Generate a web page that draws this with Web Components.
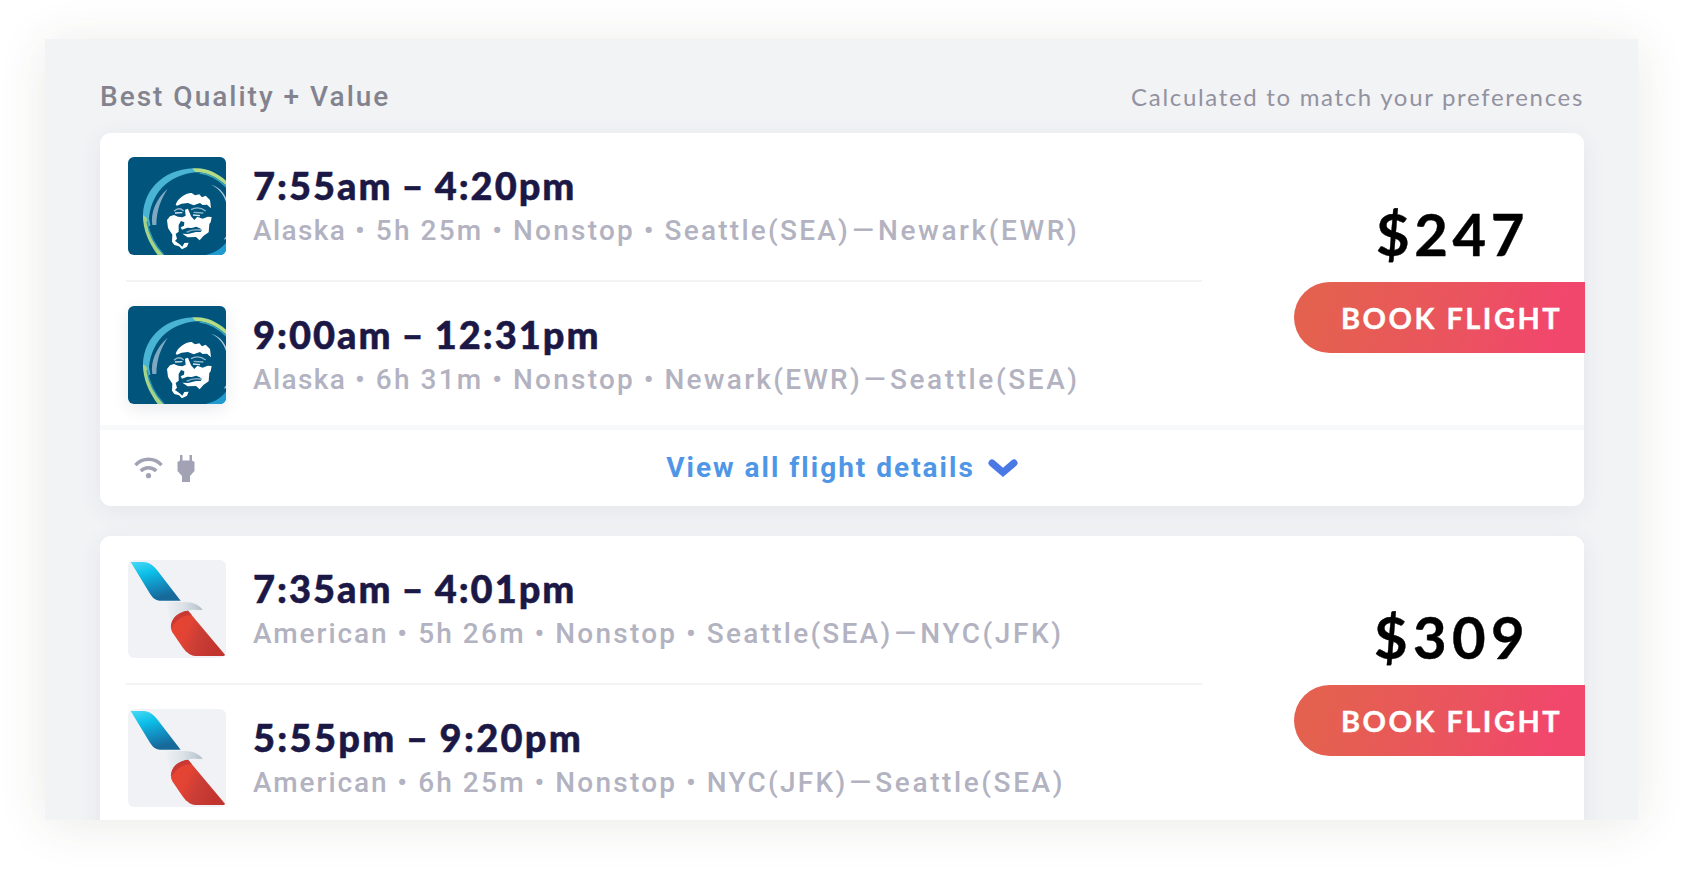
<!DOCTYPE html>
<html lang="en">
<head>
<meta charset="utf-8">
<title>Flight results</title>
<style>
html,body{margin:0;height:100%;background:#fff;overflow:hidden}
body{font-family:Lato,"Liberation Sans",sans-serif}
flight-leg[airline="american"]{--carrier-spacing:1.95px}
</style>
</head>
<body>
<flight-results heading="Best Quality + Value" note="Calculated to match your preferences">
  <flight-card price="$247" amenities>
    <flight-leg airline="alaska" carrier="Alaska" time="7:55am – 4:20pm" from="Seattle(SEA)" to="Newark(EWR)">5h 25m • Nonstop</flight-leg>
    <flight-leg airline="alaska" carrier="Alaska" raised time="9:00am – 12:31pm" from="Newark(EWR)" to="Seattle(SEA)">6h 31m • Nonstop</flight-leg>
  </flight-card>
  <flight-card price="$309" style="--price-spacing:5.4px;--price-inset:80px">
    <flight-leg airline="american" carrier="American" time="7:35am – 4:01pm" from="Seattle(SEA)" to="NYC(JFK)">5h 26m • Nonstop</flight-leg>
    <flight-leg airline="american" carrier="American" time="5:55pm – 9:20pm" from="NYC(JFK)" to="Seattle(SEA)" style="--time-spacing:2.3px">6h 25m • Nonstop</flight-leg>
  </flight-card>
</flight-results>
<script>
class BaseElement extends HTMLElement {
  connectedCallback() {
    if (this.shadowRoot) return;
    this.attachShadow({ mode: 'open' }).innerHTML = this.render();
  }
  attr(name) { return this.getAttribute(name) || ''; }
}

customElements.define('airline-logo', class extends BaseElement {
  render() {
    const art = this.attr('name') === 'alaska' ? `
      <rect x="25" y="22" width="294" height="294" fill="#01557d"/>
      <path d="M70 205C68 130 122 60 222 56L250 67C160 66 98 118 88 205L92 228L78 232Z" fill="#49b4d4"/>
      <path d="M70 196C69 242 89 282 114 316H132C105 284 88 250 81 205Z" fill="#a5d487"/>
      <path d="M82 215C88 255 106 288 133 315" fill="none" stroke="#2a91b2" stroke-width="4"/>
      <path d="M218 57C255 51 292 69 320 94V108C290 81 262 68 228 67Z" fill="#b4dc86"/>
      <path d="M240 70C272 74 298 89 320 112" fill="none" stroke="#3aa6bd" stroke-width="5"/>
      <path d="M98 226C92 190 108 148 144 117C124 148 111 180 110 226Z" fill="#7fa9c3"/>
      <path d="M274 106C295 114 312 133 320 160V146C308 123 294 110 274 106Z" fill="#a9c9da"/>
      <path d="M258 316C287 309 306 296 320 278V316Z" fill="#1f9bd0"/>
      <path d="M312 270L320 258V268Z" fill="#8bc5de"/>
      <path fill="#fff" d="M168 165C174 147 195 131 216 130L226 137L239 134L247 143L258 138L271 151L274 176L262 165L249 166L241 160L222 167L205 160L186 162L172 168Z"/>
      <path fill="#fff" d="M151 200L163 196L175 201L188 203L198 198L196 180L205 177L214 200L224 211L233 201L249 207L264 201L276 202L273 218L269 223L267 248L251 259L240 272L229 262L204 263L188 252L205 253L229 247L244 247L243 237L230 231L216 235L203 234L187 240L183 233L193 228L194 218L184 214L177 226L177 246L168 253L172 267L166 274L180 284L188 291L194 280L207 279L202 291L187 299L178 290L164 286L157 276L158 255L145 235L142 211Z"/>
      <path d="M163 185C173 175 184 176 192 184M214 180C229 172 246 175 258 184M222 188L251 190" fill="none" stroke="#91b8cc" stroke-width="4"/>
      <path d="M166 190L188 189M220 196L241 198" stroke="#d7e6ed" stroke-width="4"/>
      <path d="M201 248C216 239 232 239 247 242" fill="none" stroke="#7ba9c2" stroke-width="5"/>` : `
      <defs>
        <linearGradient id="b" x1="0" y1="0" x2=".35" y2="1"><stop offset="0" stop-color="#4cd9f7"/><stop offset=".35" stop-color="#0cc0e8"/><stop offset=".7" stop-color="#128fc2"/><stop offset="1" stop-color="#17699a"/></linearGradient>
        <linearGradient id="r" x1="0" y1="0" x2="1" y2=".35"><stop offset="0" stop-color="#e8452f"/><stop offset=".4" stop-color="#e24334"/><stop offset=".65" stop-color="#c93d36"/><stop offset="1" stop-color="#c2352f"/></linearGradient>
        <linearGradient id="g" x1="0" y1="0" x2="1" y2="0"><stop offset="0" stop-color="#f0f2f6"/><stop offset=".5" stop-color="#dce2e7"/><stop offset="1" stop-color="#b3bfca"/></linearGradient>
      </defs>
      <rect x="25" y="22" width="294" height="294" fill="#f0f2f6"/>
      <path d="M133 148H186C217 146 240 156 249 172C231 172 213 168 198 177C176 183 160 201 152 226C151 201 148 172 133 148Z" fill="url(#g)"/>
      <path d="M33 28H72C89 29 102 39 112 52L183 144H121C106 143 98 134 91 123Z" fill="url(#b)"/>
      <path d="M205 174L316 306Q317 310 311 310H228C208 309 196 294 186 280L158 239C143 210 168 180 205 174Z" fill="url(#r)"/>
      <path d="M205 174L217 188C191 185 172 200 156 223C153 195 177 177 205 174Z" fill="#c93934"/>`;
    return `<style>:host{display:block;width:98px;height:98px;border-radius:6px;overflow:hidden}
      :host([raised]){box-shadow:0 5px 16px rgba(40,50,90,.10)}svg{display:block;width:100%;height:100%}</style>
      <svg viewBox="25 22 294 294">${art}</svg>`;
  }
});

customElements.define('flight-leg', class extends BaseElement {
  render() {
    return `<style>
      :host{display:flex;gap:27px;padding:24px 0 21px 2px}
      .text{padding-top:6px;white-space:nowrap}
      .time{font:900 38px/44px Lato,sans-serif;letter-spacing:var(--time-spacing,2px);word-spacing:-2px;color:#1b1846;-webkit-text-stroke:.5px #1b1846}
      .info{margin-top:7px;font:500 28px/34px Roboto,sans-serif;letter-spacing:2.25px;word-spacing:-.5px;color:#b2b2c1}
      .carrier{letter-spacing:var(--carrier-spacing,1.4px)}
      .dash{margin:0 2px}
      .to{letter-spacing:2.6px}
      </style><airline-logo name="${this.attr('airline')}" ${this.hasAttribute('raised') ? 'raised' : ''}></airline-logo>
      <div class="text"><div class="time">${this.attr('time')}</div><div class="info"><span class="carrier">${this.attr('carrier')}</span> • <slot></slot> • ${this.attr('from')}<span class="dash">—</span><span class="to">${this.attr('to')}</span></div></div>`;
  }
});

customElements.define('book-button', class extends BaseElement {
  render() {
    return `<style>:host{display:block}
      button{display:block;box-sizing:border-box;width:291px;height:71px;padding:0 0 0 47px;border:0;border-radius:36px 0 0 36px;text-align:left;white-space:nowrap;
        background:linear-gradient(105deg,#e4614f 10%,#ea545e 55%,#f1476c 88%);color:#fff;font:700 29px/72px Lato,sans-serif;letter-spacing:2.5px;-webkit-text-stroke:.4px #fff}
      </style><button><slot></slot></button>`;
  }
});

customElements.define('card-footer', class extends BaseElement {
  render() {
    return `<style>
      :host{display:grid;grid-template-columns:1fr auto 1fr;align-items:center;height:76px;border-top:5px solid #f8f9fb;padding:0 34px}
      .icons{display:flex;gap:14px;align-items:center}
      .link{display:flex;align-items:center;gap:13px;white-space:nowrap;font:700 28px/34px Roboto,sans-serif;letter-spacing:2px;color:#4f97e6}
      svg{display:block}
      </style>
      <div class="icons">
        <svg width="29" height="24" viewBox="0 0 30 24" fill="none" stroke="#a1a3b5" stroke-width="3.6"><path d="M1.5 9C9 1 21 1 28.500 9M7 15C11.500 10.500 18.500 10.500 23 15"/><circle cx="15" cy="20" r="2.700" fill="#a1a3b5" stroke="none"/></svg>
        <svg width="18" height="27" viewBox="0 0 18 27" fill="#a1a3b5"><path d="M3 0H5.500V5.500H12.500V0H15V5.500L17.500 7V16L13 21V27H5V21L.5 16V7L3 5.500Z"/></svg>
      </div>
      <div class="link"><span>View all flight details</span>
        <svg width="30" height="19" viewBox="0 0 30 19"><path d="M4 4L15 13.500L26 4" fill="none" stroke="#4a78e4" stroke-width="7" stroke-linecap="round"/></svg>
      </div><span></span>`;
  }
});

customElements.define('flight-card', class extends BaseElement {
  render() {
    return `<style>
      :host{display:block;border-radius:11px;background:#fff;box-shadow:0 5px 24px rgba(45,50,80,.07)}
      :host(:not([amenities])){padding-bottom:81px}
      .main{display:grid;grid-template-columns:1076px 291px;justify-content:space-between;padding-left:26px;margin-right:-1px}
      ::slotted(flight-leg:not(:last-child)){border-bottom:2px solid #f2f3f5;padding-bottom:25px}
      .buy{padding-top:66px}
      .price{font:700 58px/70px Lato,sans-serif;letter-spacing:var(--price-spacing,4.6px);color:#000;margin:0 0 12.500px var(--price-inset,82px);-webkit-text-stroke:.4px #000}
      </style>
      <div class="main"><div><slot></slot></div>
      <div class="buy"><div class="price">${this.attr('price')}</div><book-button>BOOK FLIGHT</book-button></div></div>
      ${this.hasAttribute('amenities') ? '<card-footer></card-footer>' : ''}`;
  }
});

customElements.define('flight-results', class extends BaseElement {
  render() {
    return `<style>
      :host{display:block;box-sizing:border-box;height:870px;padding:39px 45px 50px}
      .shade{height:781px;box-shadow:0 4px 46px rgba(60,60,40,.105)}
      .panel{box-sizing:border-box;height:100%;overflow:hidden;background:#f2f3f5;padding:40px 54px 0 55px}
      header{display:flex;justify-content:space-between;align-items:baseline;height:54px;color:#83838f;white-space:nowrap}
      h2{margin:0;font:500 28px/36px Roboto,sans-serif;letter-spacing:2px}
      header span{font:400 24px/36px Lato,sans-serif;letter-spacing:1.68px;color:#9292a0}
      .list{display:flex;flex-direction:column;gap:30px}
      </style>
      <div class="shade"><div class="panel"><header><h2>${this.attr('heading')}</h2><span>${this.attr('note')}</span></header>
      <div class="list"><slot></slot></div></div></div>`;
  }
});
</script>
</body>
</html>
